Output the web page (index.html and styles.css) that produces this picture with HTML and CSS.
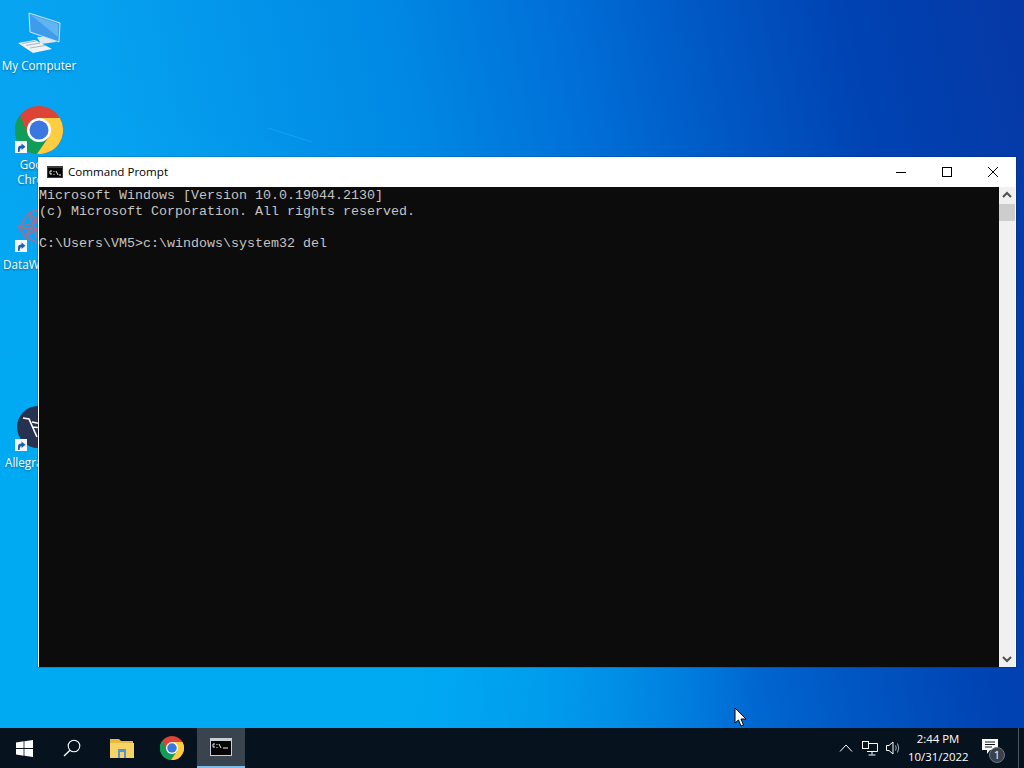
FILE: index.html
```html
<!DOCTYPE html>
<html lang="en">
<head>
    <meta charset="UTF-8">
    <meta name="viewport" content="width=device-width, initial-scale=1.0">
    <title>Command Prompt</title>
    <link rel="stylesheet" href="styles.css">
</head>
<body>
    <svg class="defs" width="0" height="0">
        <symbol id="chrome" viewBox="0 0 48 48">
            <circle cx="24" cy="24" r="24" fill="#db4437"/>
            <path d="M5 9 A24 24 0 0 0 22 48 L34.4 30 L13.6 30 Z" fill="#0f9d58"/>
            <path d="M44.8 12 L24 12 L34.4 30 L22 48 A24 24 0 0 0 44.8 12 Z" fill="#ffcd40"/>
            <circle cx="24" cy="24" r="12" fill="#fff"/>
            <circle cx="24" cy="24" r="9.5" fill="#3a78e0"/>
        </symbol>
        <symbol id="shortcut" viewBox="0 0 12 12">
            <rect width="12" height="12" fill="#f4f6f8"/>
            <path d="M3 11 V7.5 Q3 4.5 6.5 4.5 V2.5 L10.5 5.8 L6.5 9 V7 Q5 7 4.5 11 Z" fill="#1f5fb0"/>
        </symbol>
    </svg>

    <div class="desktop">
        <svg class="streak" width="50" height="20" viewBox="0 0 50 20"><path d="M2 2 L46 16" stroke="#5cc4f8" stroke-width="1.2" opacity="0.25"/></svg>

        <!-- desktop icons -->
        <div class="icon icon-computer">
            <svg class="icon-img" width="48" height="48" viewBox="0 0 48 48">
                <path d="M22 28 L38 28 L41 33 L26 35 Z" fill="#dfe7ee"/>
                <path d="M14 4 L45 14 L44 33 L15 23 Z" fill="#3f9ceb" stroke="#c9ebff" stroke-width="1"/>
                <path d="M16 6 L43 15 L43 28 Z" fill="#62b4f3"/>
                <path d="M3 34 L20 31 L37 40 L18 44 Z" fill="#eef3f7"/>
                <path d="M7 34.5 L21 32 M11 36.5 L25 34 M15 39 L30 36.5" stroke="#a9b6c2" stroke-width="1"/>
            </svg>
            <div class="icon-label">My Computer</div>
        </div>

        <div class="icon icon-chrome">
            <svg class="icon-img" width="48" height="48"><use href="#chrome"/></svg>
            <svg class="arrow" width="12" height="12"><use href="#shortcut"/></svg>
            <div class="icon-label">Google<br>Chrome</div>
        </div>

        <div class="icon icon-data">
            <svg class="icon-img" width="48" height="48" viewBox="0 0 48 48">
                <g stroke="#b5688a" stroke-width="1.8" fill="none" opacity="0.85">
                    <path d="M4 22 L14 8 L28 3 L38 12 L36 28 L24 38 L10 32 Z"/>
                    <path d="M14 8 L24 38 M28 3 L10 32 M38 12 L4 22 M36 28 L14 8 M4 22 L36 28 M28 3 L24 38 M10 32 L38 12"/>
                </g>
            </svg>
            <svg class="arrow" width="12" height="12"><use href="#shortcut"/></svg>
            <div class="icon-label label-left">DataW</div>
        </div>

        <div class="icon icon-allegra">
            <svg class="icon-img" width="48" height="48" viewBox="0 0 48 48">
                <circle cx="23" cy="23" r="21" fill="#26324f"/>
                <path d="M8 14 L14 15 L22 33 M17 18 L27 20 M18 23 L27 24" stroke="#fff" stroke-width="1.6" fill="none"/>
            </svg>
            <svg class="arrow" width="12" height="12"><use href="#shortcut"/></svg>
            <div class="icon-label label-left">Allegra</div>
        </div>

        <!-- console window -->
        <div class="window">
            <div class="titlebar">
                <svg class="cmd-icon" width="16" height="12" viewBox="0 0 16 12">
                    <rect width="16" height="12" fill="#3c3c3c"/>
                    <rect x="1" y="2" width="14" height="9" fill="#050505"/>
                    <path d="M5 5 H3 V8 H5 M7 5 V6 M7 8 V9 M9 5 L11 9 M12 9 H14" stroke="#eee" stroke-width="1" fill="none"/>
                </svg>
                <span class="title">Command Prompt</span>
                <div class="caption-buttons">
                    <button class="caption-btn">
                        <svg width="10" height="10" viewBox="0 0 10 10"><path d="M0 5.5 H10" stroke="#000"/></svg>
                    </button>
                    <button class="caption-btn">
                        <svg width="10" height="10" viewBox="0 0 10 10"><rect x="0.5" y="0.5" width="9" height="9" fill="none" stroke="#000"/></svg>
                    </button>
                    <button class="caption-btn">
                        <svg width="10" height="10" viewBox="0 0 10 10"><path d="M0 0 L10 10 M10 0 L0 10" stroke="#000"/></svg>
                    </button>
                </div>
            </div>
            <div class="client">
                <pre class="console">Microsoft Windows [Version 10.0.19044.2130]
(c) Microsoft Corporation. All rights reserved.

C:\Users\VM5&gt;c:\windows\system32 del</pre>
                <div class="scrollbar">
                    <svg class="scroll-arrow" width="16" height="17" viewBox="0 0 16 17"><path d="M4 10 L8 6 L12 10" stroke="#505050" stroke-width="2" fill="none"/></svg>
                    <div class="scroll-thumb"></div>
                    <div class="scroll-track"></div>
                    <svg class="scroll-arrow" width="16" height="17" viewBox="0 0 16 17"><path d="M4 7 L8 11 L12 7" stroke="#505050" stroke-width="2" fill="none"/></svg>
                </div>
            </div>
        </div>

        <!-- mouse pointer -->
        <svg class="cursor" width="14" height="20" viewBox="0 0 14 20">
            <path d="M1 1 V16 L4.5 13 L7 19 L9.5 18 L7 12 H12 Z" fill="#fff" stroke="#000"/>
        </svg>
    </div>

    <div class="taskbar">
        <button class="task-btn start">
            <svg width="17" height="17" viewBox="0 0 17 17">
                <path d="M0 2.4 L7.6 1.3 V8 H0 Z M8.4 1.2 L17 0 V8 H8.4 Z M0 9 H7.6 V15.7 L0 14.6 Z M8.4 9 H17 V17 L8.4 15.8 Z" fill="#fff"/>
            </svg>
        </button>
        <button class="task-btn">
            <svg width="18" height="18" viewBox="0 0 18 18">
                <circle cx="11" cy="7" r="5.8" fill="none" stroke="#fff" stroke-width="1.1"/>
                <path d="M7 11.3 L1 17" stroke="#fff" stroke-width="1.3"/>
            </svg>
        </button>
        <button class="task-btn wide first">
            <svg width="24" height="20" viewBox="0 0 24 20">
                <path d="M0 1 H9 L11 3 H23 V19 H0 Z" fill="#e8b93f"/>
                <rect y="5" width="24" height="15" fill="#f6d365"/>
                <rect x="8" y="11" width="8" height="9" fill="#4f96d8"/>
                <rect x="10" y="14" width="4" height="6" fill="#f6d365"/>
            </svg>
        </button>
        <button class="task-btn wide">
            <svg width="24" height="24"><use href="#chrome"/></svg>
        </button>
        <button class="task-btn active">
            <svg width="22" height="18" viewBox="0 0 22 18">
                <rect width="22" height="18" fill="#c9ced2"/>
                <rect x="1" y="3" width="20" height="14" fill="#050505"/>
                <path d="M5 6 H3 V9 H5 M7 6 V7 M7 9 V10 M9 6 L11 10 M13 10 H18" stroke="#eee" stroke-width="1" fill="none"/>
            </svg>
        </button>

        <div class="tray">
            <svg class="tray-icon tray-chevron" width="14" height="8" viewBox="0 0 14 8"><path d="M1 7.5 L7 1 L13 7.5" stroke="#fff" fill="none"/></svg>
            <svg class="tray-icon tray-network" width="16" height="15" viewBox="0 0 16 15">
                <path d="M4.5 2.5 H15.5 V10.5 H5 M10 10.5 V13.5 M6.5 14 H13.5" stroke="#fff" fill="none"/>
                <rect x="0.5" y="0.5" width="6" height="7" fill="#0a1622" stroke="#fff"/>
            </svg>
            <svg class="tray-icon tray-volume" width="16" height="14" viewBox="0 0 16 14">
                <path d="M0.5 4.5 H3 L7 1 V13 L3 9.5 H0.5 Z" fill="none" stroke="#fff"/>
                <path d="M9.5 4.5 Q11 7 9.5 9.5 M11.5 2.5 Q14 7 11.5 11.5" stroke="#aab2b8" fill="none"/>
            </svg>
            <div class="clock">
                <div>2:44 PM</div>
                <div>10/31/2022</div>
            </div>
            <div class="notify">
                <svg class="notify-icon" width="16" height="15" viewBox="0 0 16 15">
                    <path d="M0 0 H16 V11 H8 L5 15 V11 H0 Z" fill="#fff"/>
                    <path d="M3 3 H13 M3 5.5 H13 M3 8 H10" stroke="#0a1622"/>
                </svg>
                <span class="badge">1</span>
            </div>
            <div class="show-desktop"></div>
        </div>
    </div>
</body>
</html>
```

FILE: styles.css
```css
html, body {
    margin: 0;
    padding: 0;
    height: 100%;
    overflow: hidden;
}

body {
    display: flex;
    flex-direction: column;
    font-family: "Open Sans", "Noto Sans", sans-serif;
}

.defs {
    position: absolute;
}

/* wallpaper */
.desktop {
    position: relative;
    flex: 1;
    overflow: hidden;
    background:
        radial-gradient(ellipse 640px 520px at 120px 640px, #00aaf3 45%, rgba(0,170,243,0) 100%),
        linear-gradient(78deg, #08a8f2 0%, #06a2f0 20%, #0088e4 46%, #0070d8 60%, #005cc8 70%, #0042b2 85%, #0638a6 100%);
}

.streak {
    position: absolute;
    left: 266px;
    top: 126px;
}

.icon {
    position: absolute;
    left: 0;
    width: 78px;
    color: #fff;
}

.icon-computer { top: 9px; }
.icon-chrome { top: 106px; }
.icon-data { top: 205px; }
.icon-allegra { top: 404px; }

.icon-img {
    display: block;
    margin: 0 auto;
}

.arrow {
    position: absolute;
    left: 15px;
    top: 35px;
}

.icon-label {
    margin-top: 3px;
    font-size: 11.7px;
    line-height: 15px;
    text-align: center;
    text-shadow: 0 1px 2px rgba(0,0,0,0.4);
}

.icon-computer .icon-label {
    margin-top: 1px;
}

.icon-data .icon-label {
    margin-top: 4px;
}

.label-left {
    text-align: left;
    padding-left: 3px;
}

.icon-allegra .label-left {
    padding-left: 5px;
}

/* console window */
.window {
    position: absolute;
    left: 38px;
    top: 157px;
    width: 978px;
    height: 510px;
    display: flex;
    flex-direction: column;
    background-color: #fff;
    box-shadow: 0 0 1px rgba(0,0,0,0.8);
}

.titlebar {
    height: 30px;
    display: flex;
    align-items: center;
    padding-left: 9px;
}

.cmd-icon {
    margin-right: 5px;
}

.title {
    font-size: 11.6px;
    color: #000;
    flex: 1;
    margin-top: -2px;
}

.caption-buttons {
    display: flex;
}

.caption-btn {
    width: 46px;
    height: 30px;
    padding: 0;
    border: 0;
    background: none;
    display: flex;
    align-items: center;
    justify-content: center;
}

.client {
    flex: 1;
    display: flex;
    min-height: 0;
    margin: 0 1px 0 1px;
}

.console {
    flex: 1;
    margin: 0;
    padding-top: 1px;
    background-color: #0c0c0c;
    color: #c4c4c4;
    font-family: "Liberation Mono", monospace;
    font-size: 13.33px;
    line-height: 16px;
}

.scrollbar {
    width: 16px;
    display: flex;
    flex-direction: column;
    background-color: #f0f0f0;
}

.scroll-arrow {
    display: block;
}

.scroll-thumb {
    height: 17px;
    background-color: #cdcdcd;
}

.scroll-track {
    flex: 1;
}

.cursor {
    position: absolute;
    left: 734px;
    top: 707px;
}

/* taskbar */
.taskbar {
    height: 40px;
    flex: none;
    display: flex;
    background-color: #06121e;
}

.task-btn {
    width: 48px;
    height: 40px;
    padding: 0;
    border: 0;
    background: none;
    display: flex;
    align-items: center;
    justify-content: center;
}

.task-btn.wide {
    width: 50px;
}

.task-btn.first {
    margin-left: 1px;
}

.task-btn.active {
    background-color: #39444e;
    border-bottom: 2px solid #7fbce8;
    box-sizing: border-box;
}

.tray {
    flex: 1;
    display: flex;
    align-items: center;
    justify-content: flex-end;
    color: #fff;
}

.tray-chevron { margin-right: 9px; }
.tray-network { margin-right: 8px; }
.tray-volume { margin-right: 6px; }

.clock {
    width: 60px;
    font-size: 11.4px;
    line-height: 18px;
    text-align: center;
    white-space: nowrap;
}

.notify {
    position: relative;
    width: 40px;
    height: 40px;
    margin-left: 2px;
    display: flex;
    align-items: center;
    justify-content: center;
}

.notify-icon {
    margin-top: -4px;
}

.badge {
    position: absolute;
    left: 19px;
    top: 19px;
    width: 16px;
    height: 16px;
    border-radius: 50%;
    background-color: #3a4148;
    border: 1px solid #707880;
    box-sizing: border-box;
    font-size: 11px;
    line-height: 14px;
    text-align: center;
}

.show-desktop {
    width: 5px;
    height: 40px;
    margin-left: 8px;
    border-left: 1px solid #4a5560;
}
```
